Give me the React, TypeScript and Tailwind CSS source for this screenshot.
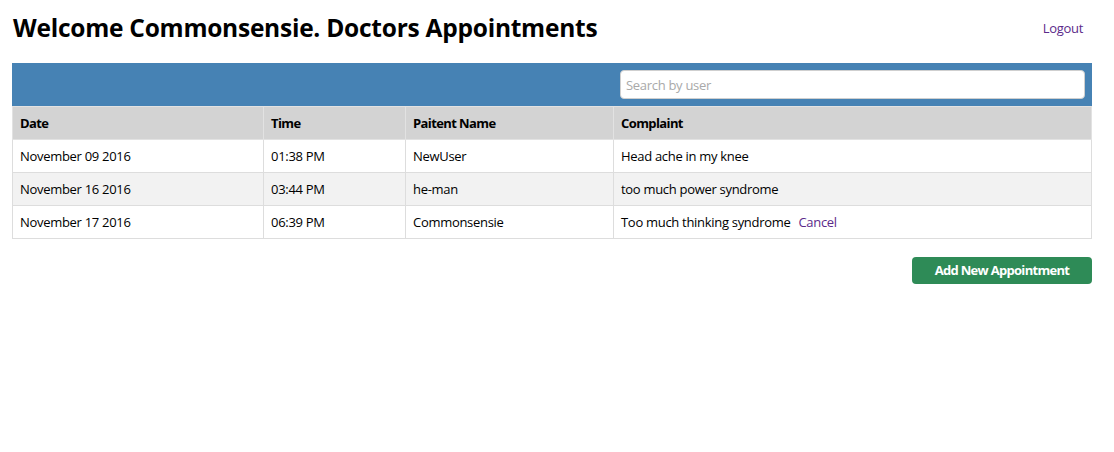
import React from "react";

const rows = [
  { date: "November 09 2016", time: "01:38 PM", name: "NewUser", complaint: "Head ache in my knee", cancel: false },
  { date: "November 16 2016", time: "03:44 PM", name: "he-man", complaint: "too much power syndrome", cancel: false },
  { date: "November 17 2016", time: "06:39 PM", name: "Commonsensie", complaint: "Too much thinking syndrome", cancel: true },
];

export default function App() {
  return (
    <div
      className="min-h-[452px] bg-white pl-[12px] pr-[22px] text-[13px] tracking-[-0.3px] text-black"
      style={{ fontFamily: "'Open Sans', 'Noto Sans', sans-serif" }}
    >
      <div className="flex items-start justify-between h-[63px]">
        <h1 className="pl-[1px] pt-[11px] text-[24.5px] font-bold leading-[34px] tracking-[-0.25px]">
          Welcome Commonsensie. Doctors Appointments
        </h1>
        <a className="mt-[18px] mr-[9px] text-[#5b2a8a] leading-[20px] cursor-pointer">Logout</a>
      </div>
      <div className="flex h-[43px] items-center justify-end bg-[#4682b4] pr-[7px]">
        <input
          className="h-[29px] w-[465px] rounded-[4px] border border-[#cfcfcf] bg-white px-[5px] text-[13px] tracking-[-0.3px] placeholder-[#a9a9a9] outline-none"
          placeholder="Search by user"
        />
      </div>
      <table className="w-full border-collapse">
        <colgroup>
          <col className="w-[251px]" />
          <col className="w-[142px]" />
          <col className="w-[208px]" />
          <col />
        </colgroup>
        <thead>
          <tr className="h-[33px] bg-[#d3d3d3]">
            <th className="border border-[#e2e2e2] px-[7px] pt-[2px] text-left font-bold tracking-[-0.6px]">Date</th>
            <th className="border border-[#e2e2e2] px-[7px] pt-[2px] text-left font-bold tracking-[-0.6px]">Time</th>
            <th className="border border-[#e2e2e2] px-[7px] pt-[2px] text-left font-bold tracking-[-0.6px]">Paitent Name</th>
            <th className="border border-[#e2e2e2] px-[7px] pt-[2px] text-left font-bold tracking-[-0.6px]">Complaint</th>
          </tr>
        </thead>
        <tbody>
          {rows.map((r, i) => (
            <tr key={i} className={`h-[33px] ${i === 1 ? "bg-[#f2f2f2]" : "bg-white"}`}>
              <td className="border border-[#dddddd] px-[7px] pt-[2px]">{r.date}</td>
              <td className="border border-[#dddddd] px-[7px] pt-[2px]">{r.time}</td>
              <td className="border border-[#dddddd] px-[7px] pt-[2px]">{r.name}</td>
              <td className="border border-[#dddddd] px-[7px] pt-[2px]">
                {r.complaint}
                {r.cancel && <a className="ml-[8px] text-[#5b2a8a] cursor-pointer">Cancel</a>}
              </td>
            </tr>
          ))}
        </tbody>
      </table>
      <div className="mt-[18px] flex justify-end">
        <button className="h-[27px] w-[180px] rounded-[4px] bg-[#2e8b57] text-[13px] font-bold tracking-[-0.7px] text-white">
          Add New Appointment
        </button>
      </div>
    </div>
  );
}
